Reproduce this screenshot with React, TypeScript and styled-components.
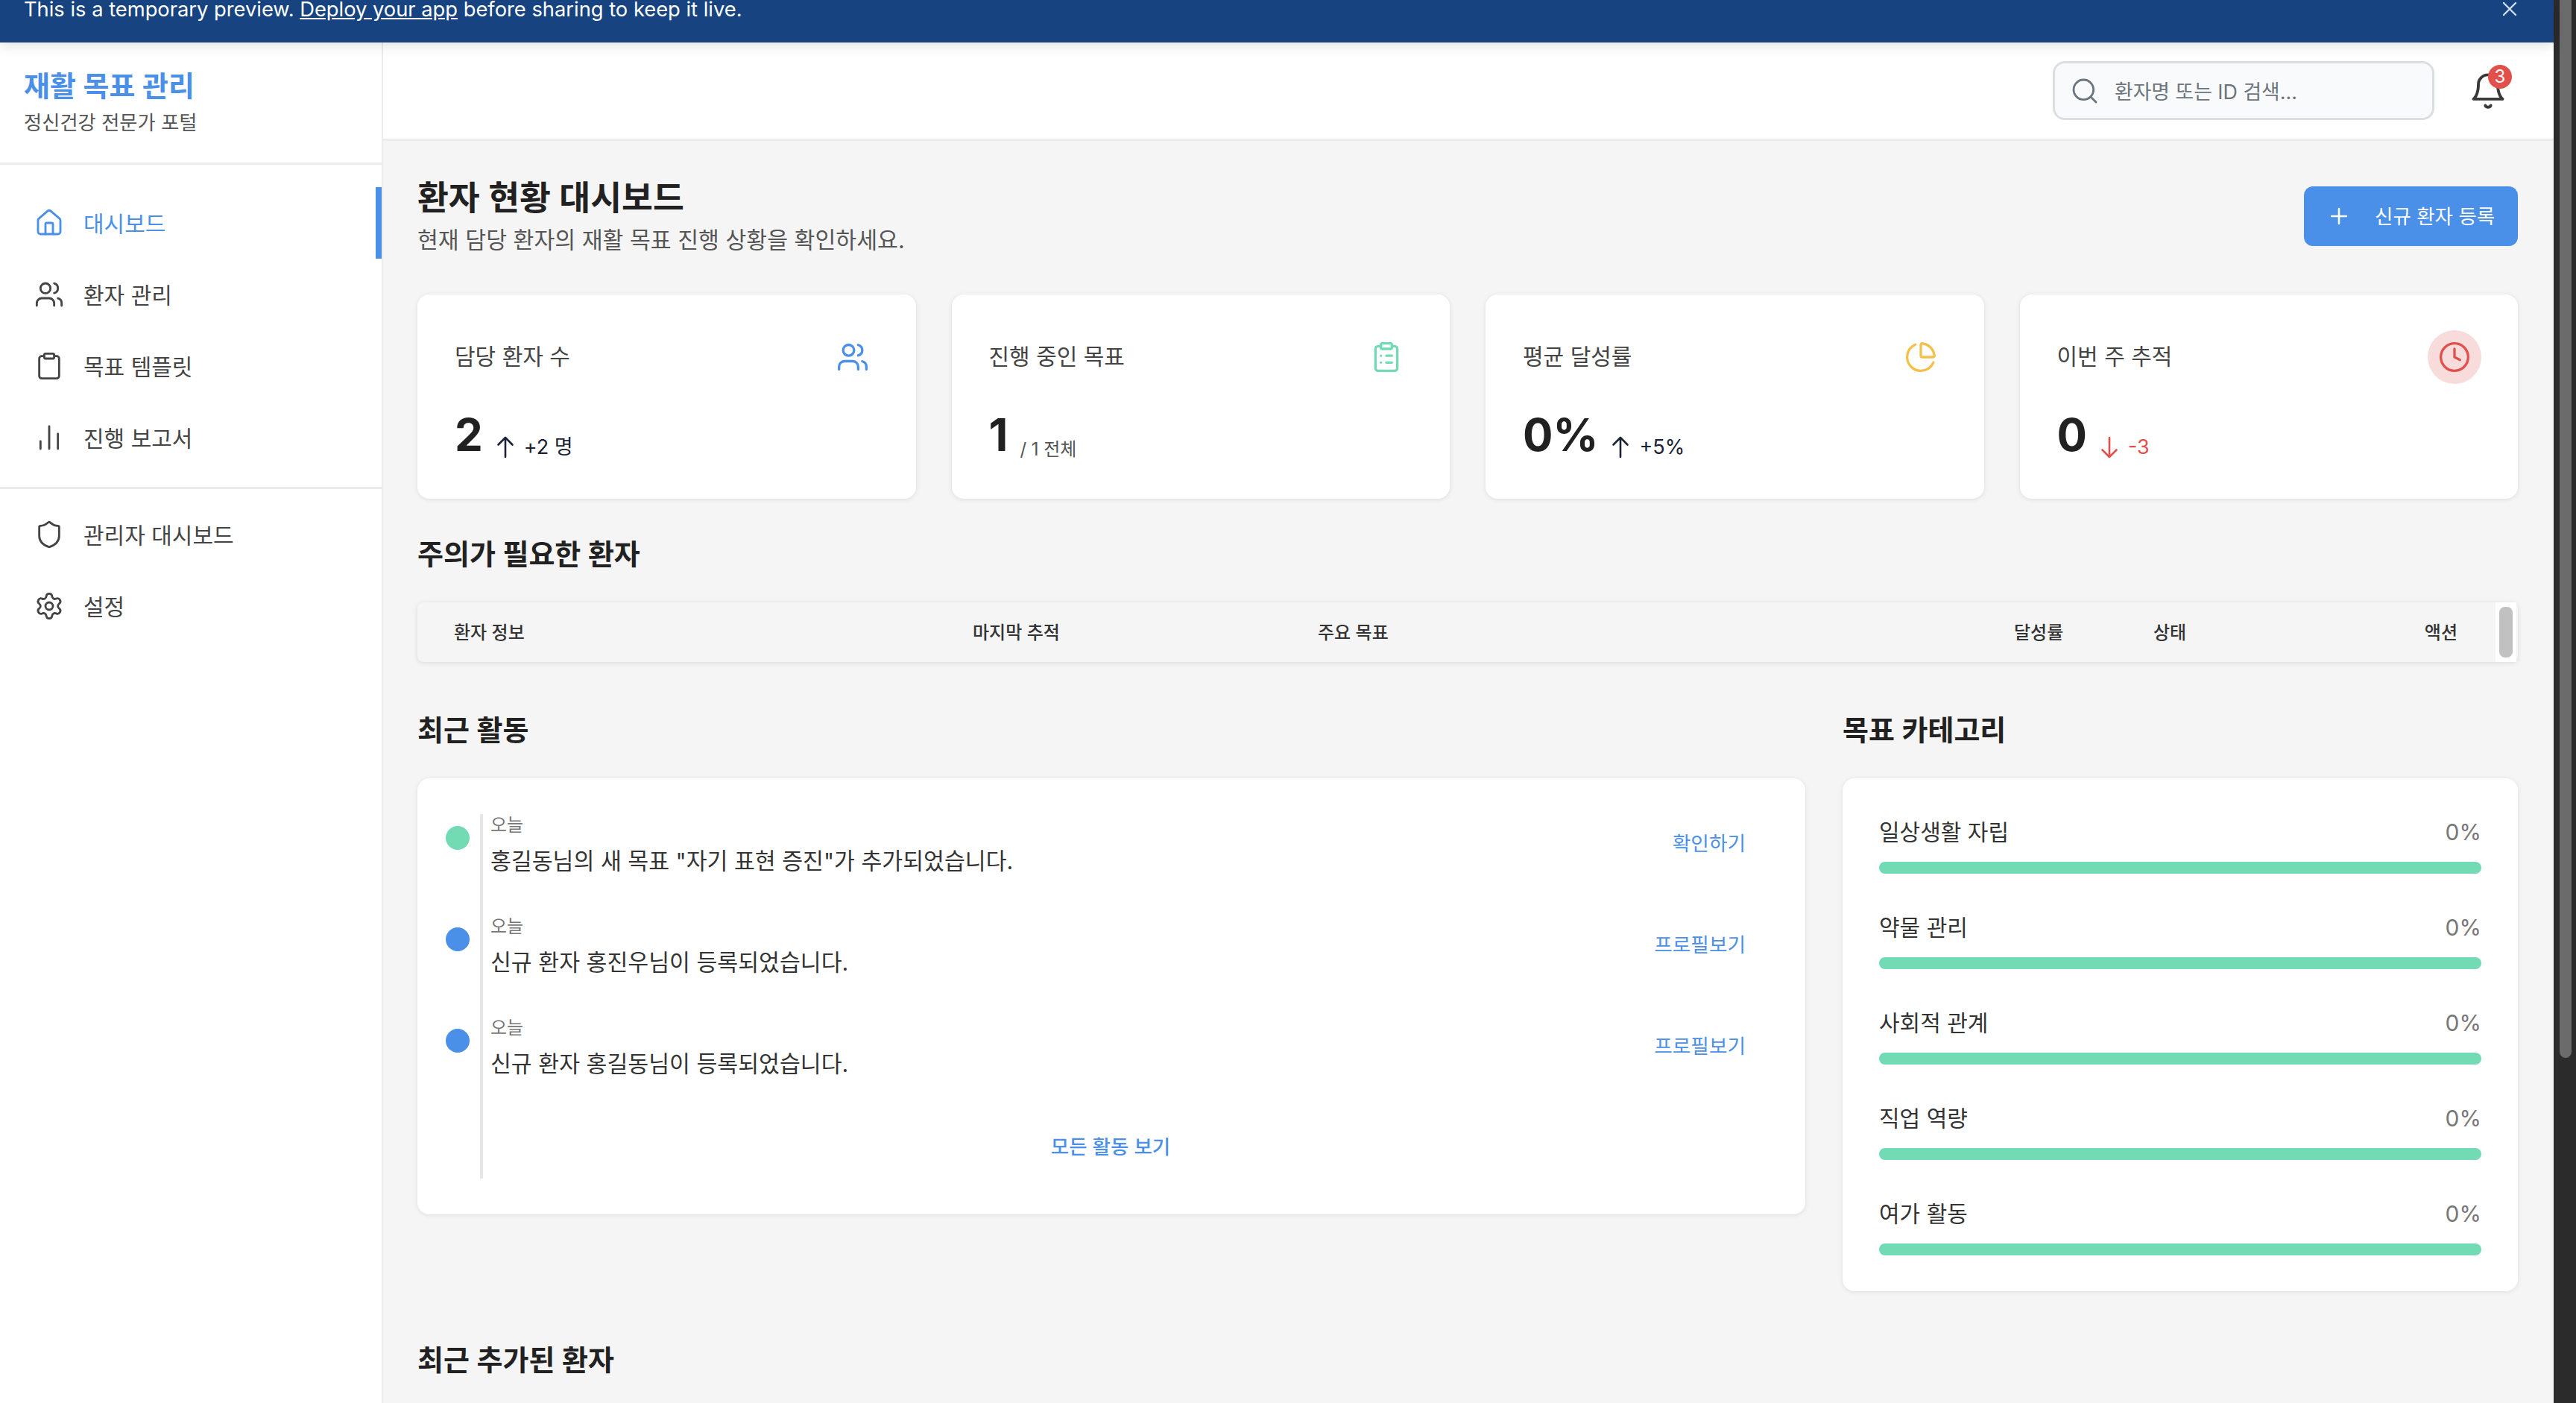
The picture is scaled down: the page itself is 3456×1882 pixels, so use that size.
import styled, { createGlobalStyle } from "styled-components";
import {
  BarChart2,
  Clipboard,
  ClipboardList,
  Clock,
  House,
  PieChart,
  Plus,
  Search,
  Settings,
  Shield,
  Users,
  X,
} from "lucide-react";

const BLUE = "#4a90e8";
const GREEN = "#72dbb3";
const YELLOW = "#f5c04a";
const RED = "#e2504c";

const GlobalStyle = createGlobalStyle`
  * { box-sizing: border-box; }
  html, body { margin: 0; height: 100%; overflow: hidden; background: #2b2b2b; }
  body {
    font-family: "Inter", "Noto Sans CJK KR", sans-serif;
    color: #212121;
  }
`;

const navItems = [
  { label: "대시보드", icon: House, active: true },
  { label: "환자 관리", icon: Users },
  { label: "목표 템플릿", icon: Clipboard },
  { label: "진행 보고서", icon: BarChart2 },
];

const stats = [
  { label: "담당 환자 수", value: "2", icon: Users, color: BLUE, trend: "up", note: "+2 명" },
  { label: "진행 중인 목표", value: "1", icon: ClipboardList, color: GREEN, sub: "/ 1 전체" },
  { label: "평균 달성률", value: "0%", icon: PieChart, color: YELLOW, trend: "up", note: "+5%" },
  { label: "이번 주 추적", value: "0", icon: Clock, color: RED, trend: "down", note: "-3", tinted: true },
];

const activities = [
  { color: GREEN, text: '홍길동님의 새 목표 "자기 표현 증진"가 추가되었습니다.', action: "확인하기" },
  { color: BLUE, text: "신규 환자 홍진우님이 등록되었습니다.", action: "프로필보기" },
  { color: BLUE, text: "신규 환자 홍길동님이 등록되었습니다.", action: "프로필보기" },
];

const categories = ["일상생활 자립", "약물 관리", "사회적 관계", "직업 역량", "여가 활동"];

function TrendArrow({ down }: { down: boolean }) {
  return (
    <svg width="24" height="30" viewBox="0 0 24 30" fill="none" stroke="currentColor" strokeWidth="2.6" strokeLinecap="round" strokeLinejoin="round">
      {down ? <path d="M12 2v26M2.5 18.5 12 28l9.5-9.5" /> : <path d="M12 28V2M2.5 11.5 12 2l9.5 9.5" />}
    </svg>
  );
}

function BellIcon() {
  return (
    <svg width="52" height="52" viewBox="0 0 24 24" fill="none" stroke="#3a3a3a" strokeWidth="1.8" strokeLinecap="round" strokeLinejoin="round">
      <path d="M6 8a6 6 0 0 1 12 0c0 7 3 9 3 9H3s3-2 3-9" />
      <path d="M10.3 21a1.94 1.94 0 0 0 3.4 0" />
    </svg>
  );
}

export default function App() {
  return (
    <>
      <GlobalStyle />
      <Screen>
        <Window>
          <Banner>
            <BannerText>
              This is a temporary preview. <a href="#">Deploy your app</a> before sharing to keep it live.
            </BannerText>
            <BannerClose>
              <X size={32} strokeWidth={1.8} />
            </BannerClose>
          </Banner>
          <Body>
            <Sidebar>
              <Brand>
                <BrandTitle>재활 목표 관리</BrandTitle>
                <BrandSub>정신건강 전문가 포털</BrandSub>
              </Brand>
              <NavGroup>
                {navItems.map((item) => (
                  <NavItem key={item.label} $active={item.active}>
                    <item.icon size={40} strokeWidth={1.7} />
                    <NavLabel>{item.label}</NavLabel>
                  </NavItem>
                ))}
              </NavGroup>
              <NavGroup $bordered>
                <NavItem>
                  <Shield size={40} strokeWidth={1.7} />
                  <NavLabel>관리자 대시보드</NavLabel>
                </NavItem>
                <NavItem>
                  <Settings size={40} strokeWidth={1.7} />
                  <NavLabel>설정</NavLabel>
                </NavItem>
              </NavGroup>
            </Sidebar>
            <Main>
              <TopBar>
                <SearchBox>
                  <Search size={40} strokeWidth={1.7} color="#6c757d" />
                  <SearchText>환자명 또는 ID 검색...</SearchText>
                </SearchBox>
                <BellWrap>
                  <BellIcon />
                  <BellBadge>3</BellBadge>
                </BellWrap>
              </TopBar>
              <Content>
                <PageHead>
                  <div>
                    <PageTitle>환자 현황 대시보드</PageTitle>
                    <PageSub>현재 담당 환자의 재활 목표 진행 상황을 확인하세요.</PageSub>
                  </div>
                  <PrimaryButton>
                    <Plus size={34} strokeWidth={1.8} />
                    <ButtonLabel>신규 환자 등록</ButtonLabel>
                  </PrimaryButton>
                </PageHead>

                <StatGrid>
                  {stats.map((s) => (
                    <StatCard key={s.label}>
                      <StatTop>
                        <StatLabel>{s.label}</StatLabel>
                        <StatIcon $tinted={s.tinted} $color={s.color}>
                          <s.icon size={44} strokeWidth={1.8} />
                        </StatIcon>
                      </StatTop>
                      <StatBottom>
                        <StatValue>{s.value}</StatValue>
                        {s.sub && <StatSub>{s.sub}</StatSub>}
                        {s.trend && (
                          <Trend $down={s.trend === "down"}>
                            <TrendArrow down={s.trend === "down"} />
                            {s.note}
                          </Trend>
                        )}
                      </StatBottom>
                    </StatCard>
                  ))}
                </StatGrid>

                <AttentionTitle>주의가 필요한 환자</AttentionTitle>
                <TableHead>
                  <HeadCell>환자 정보</HeadCell>
                  <HeadCell>마지막 추적</HeadCell>
                  <HeadCell>주요 목표</HeadCell>
                  <HeadCell>달성률</HeadCell>
                  <HeadCell>상태</HeadCell>
                  <HeadCell $right>액션</HeadCell>
                  <TableScroll>
                    <TableThumb />
                  </TableScroll>
                </TableHead>

                <TwoCol>
                  <div>
                    <SectionTitle>최근 활동</SectionTitle>
                    <ActivityCard>
                      <Timeline>
                        {activities.map((a) => (
                          <ActivityRow key={a.text}>
                            <Dot $color={a.color} />
                            <ActivityBody>
                              <ActivityTime>오늘</ActivityTime>
                              <ActivityText>{a.text}</ActivityText>
                            </ActivityBody>
                            <ActivityLink>{a.action}</ActivityLink>
                          </ActivityRow>
                        ))}
                        <AllLink>모든 활동 보기</AllLink>
                      </Timeline>
                    </ActivityCard>
                  </div>
                  <div>
                    <SectionTitle>목표 카테고리</SectionTitle>
                    <CategoryCard>
                      {categories.map((c) => (
                        <CategoryRow key={c}>
                          <CategoryHead>
                            <span>{c}</span>
                            <CategoryPct>0%</CategoryPct>
                          </CategoryHead>
                          <Bar />
                        </CategoryRow>
                      ))}
                    </CategoryCard>
                  </div>
                </TwoCol>

                <RecentTitle>최근 추가된 환자</RecentTitle>
              </Content>
            </Main>
          </Body>
        </Window>
        <PageScrollbar>
          <PageThumb />
        </PageScrollbar>
      </Screen>
    </>
  );
}

const Screen = styled.div`
  display: flex;
  height: 100vh;
  overflow: hidden;
`;

const Window = styled.div`
  flex: 1;
  min-width: 0;
  display: flex;
  flex-direction: column;
  background: #f5f5f5;
`;

const Banner = styled.div`
  position: relative;
  z-index: 2;
  height: 57px;
  flex: none;
  display: flex;
  justify-content: space-between;
  padding: 0 43px 0 32px;
  background: #174480;
  color: #fff;
  box-shadow: 0 4px 16px rgba(0, 0, 0, 0.12);
`;

const BannerText = styled.div`
  font-size: 27.3px;
  line-height: 26px;
  a {
    color: inherit;
  }
`;

const BannerClose = styled.div`
  margin-top: -4px;
  height: 32px;
  color: #cfdcec;
`;

const Body = styled.div`
  flex: 1;
  min-height: 0;
  display: flex;
`;

const Sidebar = styled.aside`
  width: 514px;
  flex: none;
  background: #fff;
  border-right: 2px solid #ececec;
`;

const Brand = styled.div`
  height: 164px;
  padding: 32px 32px 0;
  border-bottom: 3px solid #ececec;
`;

const BrandTitle = styled.div`
  font-size: 38px;
  line-height: 52px;
  font-weight: 600;
  color: ${BLUE};
`;

const BrandSub = styled.div`
  margin-top: 5px;
  font-size: 26.3px;
  line-height: 38px;
  color: #555;
`;

const NavGroup = styled.nav<{ $bordered?: boolean }>`
  padding: ${(p) => (p.$bordered ? "13px 0 0" : "30px 0 18px")};
  ${(p) => p.$bordered && "border-top: 3px solid #ececec;"}
`;

const NavItem = styled.a<{ $active?: boolean }>`
  height: 96px;
  display: flex;
  align-items: center;
  gap: 26px;
  padding-left: 46px;
  font-size: 30px;
  color: ${(p) => (p.$active ? BLUE : "#444")};
  border-right: 8px solid ${(p) => (p.$active ? BLUE : "transparent")};
`;

const NavLabel = styled.span`
  margin-top: -3px;
`;

const Main = styled.main`
  flex: 1;
  min-width: 0;
  display: flex;
  flex-direction: column;
`;

const TopBar = styled.header`
  height: 132px;
  flex: none;
  display: flex;
  align-items: center;
  justify-content: flex-end;
  gap: 46px;
  padding-right: 62px;
  background: #fff;
  border-bottom: 3px solid #ececec;
`;

const SearchBox = styled.div`
  width: 512px;
  height: 79px;
  display: flex;
  align-items: center;
  gap: 20px;
  padding-left: 20px;
  background: #f8fafb;
  border: 3px solid #dcdfe2;
  border-radius: 16px;
`;

const SearchText = styled.span`
  font-size: 26.8px;
  color: #6c757d;
`;

const BellWrap = styled.div`
  position: relative;
  width: 52px;
  height: 52px;
`;

const BellBadge = styled.span`
  position: absolute;
  top: -9px;
  right: -6px;
  width: 32px;
  height: 32px;
  border-radius: 50%;
  background: ${RED};
  color: #fff;
  font-size: 24px;
  line-height: 32px;
  text-align: center;
`;

const Content = styled.div`
  flex: 1;
  min-height: 0;
  padding: 47px 48px 0 46px;
  overflow: hidden;
`;

const PageHead = styled.div`
  display: flex;
  justify-content: space-between;
  align-items: flex-start;
`;

const PageTitle = styled.h1`
  margin: 0;
  font-size: 45.5px;
  line-height: 60px;
  font-weight: 600;
`;

const PageSub = styled.p`
  margin: 5px 0 0;
  font-size: 30.3px;
  line-height: 42px;
  color: #555;
`;

const PrimaryButton = styled.button`
  width: 287px;
  height: 80px;
  margin-top: 14px;
  display: flex;
  align-items: center;
  gap: 31px;
  padding: 0 0 0 30px;
  border: 0;
  border-radius: 12px;
  background: ${BLUE};
  color: #fff;
  font: inherit;
  font-size: 26.5px;
`;

const ButtonLabel = styled.span`
  margin-top: -3px;
`;

const StatGrid = styled.div`
  display: grid;
  grid-template-columns: repeat(4, 1fr);
  gap: 48px;
  margin-top: 52px;
`;

const StatCard = styled.div`
  height: 274px;
  padding: 48px 49px 48px 50px;
  background: #fff;
  border-radius: 16px;
  box-shadow: 0 1px 6px rgba(0, 0, 0, 0.1);
`;

const StatTop = styled.div`
  display: flex;
  justify-content: space-between;
  align-items: flex-start;
  height: 72px;
`;

const StatLabel = styled.div`
  font-size: 30px;
  line-height: 72px;
  margin-top: -1px;
  height: 72px;
  color: #444;
`;

const StatIcon = styled.div<{ $tinted?: boolean; $color: string }>`
  width: 72px;
  height: 72px;
  display: flex;
  align-items: center;
  justify-content: center;
  border-radius: 50%;
  color: ${(p) => p.$color};
  background: ${(p) => (p.$tinted ? "#f8dcdb" : "transparent")};
`;

const StatBottom = styled.div`
  display: flex;
  align-items: flex-end;
  margin-top: 32px;
`;

const StatValue = styled.div`
  font-size: 60px;
  line-height: 72px;
  font-weight: 700;
`;

const StatSub = styled.span`
  margin: 0 0 -3px 16px;
  font-size: 24px;
  line-height: 38px;
  color: #555;
`;

const Trend = styled.span<{ $down?: boolean }>`
  display: inline-flex;
  align-items: center;
  gap: 13px;
  margin: 0 0 -1px 18px;
  font-size: 27px;
  line-height: 40px;
  color: ${(p) => (p.$down ? RED : "#1a2233")};
`;

const SectionTitle = styled.h2`
  margin: 0;
  font-size: 38px;
  line-height: 52px;
  font-weight: 600;
`;

const AttentionTitle = styled(SectionTitle)`
  margin-top: 48px;
`;

const TableHead = styled.div`
  position: relative;
  height: 80px;
  margin-top: 39px;
  display: grid;
  grid-template-columns: 696px 463px 934px 187px 1fr auto;
  align-items: center;
  padding: 0 81px 3px 49px;
  background: #f5f5f5;
  border-radius: 8px;
  box-shadow: 0 1px 6px rgba(0, 0, 0, 0.12);
`;

const HeadCell = styled.div<{ $right?: boolean }>`
  font-size: 24px;
  font-weight: 500;
  color: #333;
  ${(p) => p.$right && "text-align: right;"}
`;

const TableScroll = styled.div`
  position: absolute;
  top: 0;
  right: 2px;
  bottom: 0;
  width: 28px;
  padding: 6px 5px;
  background: #fff;
`;

const TableThumb = styled.div`
  height: 100%;
  border-radius: 8px;
  background: #c1c1c1;
`;

const TwoCol = styled.div`
  display: grid;
  grid-template-columns: 1fr 906px;
  column-gap: 50px;
  margin-top: 65px;
`;

const ActivityCard = styled.div`
  height: 585px;
  margin-top: 39px;
  padding: 48px 48px 48px 38px;
  background: #fff;
  border-radius: 16px;
  box-shadow: 0 1px 6px rgba(0, 0, 0, 0.1);
`;

const Timeline = styled.div`
  position: relative;
  height: 100%;
  &::before {
    content: "";
    position: absolute;
    top: 0;
    bottom: 0;
    left: 46px;
    width: 4px;
    background: #e6e6e6;
  }
`;

const ActivityRow = styled.div`
  height: 136px;
  display: flex;
  align-items: flex-start;
  gap: 28px;
`;

const Dot = styled.span<{ $color: string }>`
  width: 32px;
  height: 32px;
  flex: none;
  margin-top: 16px;
  border-radius: 50%;
  background: ${(p) => p.$color};
`;

const ActivityBody = styled.div`
  flex: 1;
`;

const ActivityTime = styled.div`
  font-size: 24px;
  line-height: 30px;
  color: #777;
`;

const ActivityText = styled.div`
  margin-top: 9px;
  font-size: 30.3px;
  line-height: 48px;
  color: #333;
`;

const ActivityLink = styled.a`
  margin: 19px 32px 0 0;
  font-size: 26.7px;
  line-height: 40px;
  color: ${BLUE};
`;

const AllLink = styled.div`
  margin-top: 18px;
  padding-left: 8px;
  text-align: center;
  font-size: 26.5px;
  line-height: 40px;
  font-weight: 500;
  color: ${BLUE};
`;

const CategoryCard = styled.div`
  margin-top: 39px;
  padding: 48px 49px;
  background: #fff;
  border-radius: 16px;
  box-shadow: 0 1px 6px rgba(0, 0, 0, 0.1);
`;

const CategoryRow = styled.div`
  margin-bottom: 48px;
  &:last-child {
    margin-bottom: 0;
  }
`;

const CategoryHead = styled.div`
  display: flex;
  justify-content: space-between;
  align-items: center;
  font-size: 30px;
  line-height: 48px;
  margin-bottom: 16px;
  color: #333;
`;

const CategoryPct = styled.span`
  color: #777;
`;

const Bar = styled.div`
  height: 16px;
  border-radius: 8px;
  background: ${GREEN};
`;

const RecentTitle = styled(SectionTitle)`
  margin-top: 66px;
`;

const PageScrollbar = styled.div`
  width: 30px;
  flex: none;
  padding: 0 6px 0 8px;
  background: #2b2b2b;
`;

const PageThumb = styled.div`
  height: 1419px;
  border-radius: 0 0 8px 8px;
  background: #6b6b6b;
`;
